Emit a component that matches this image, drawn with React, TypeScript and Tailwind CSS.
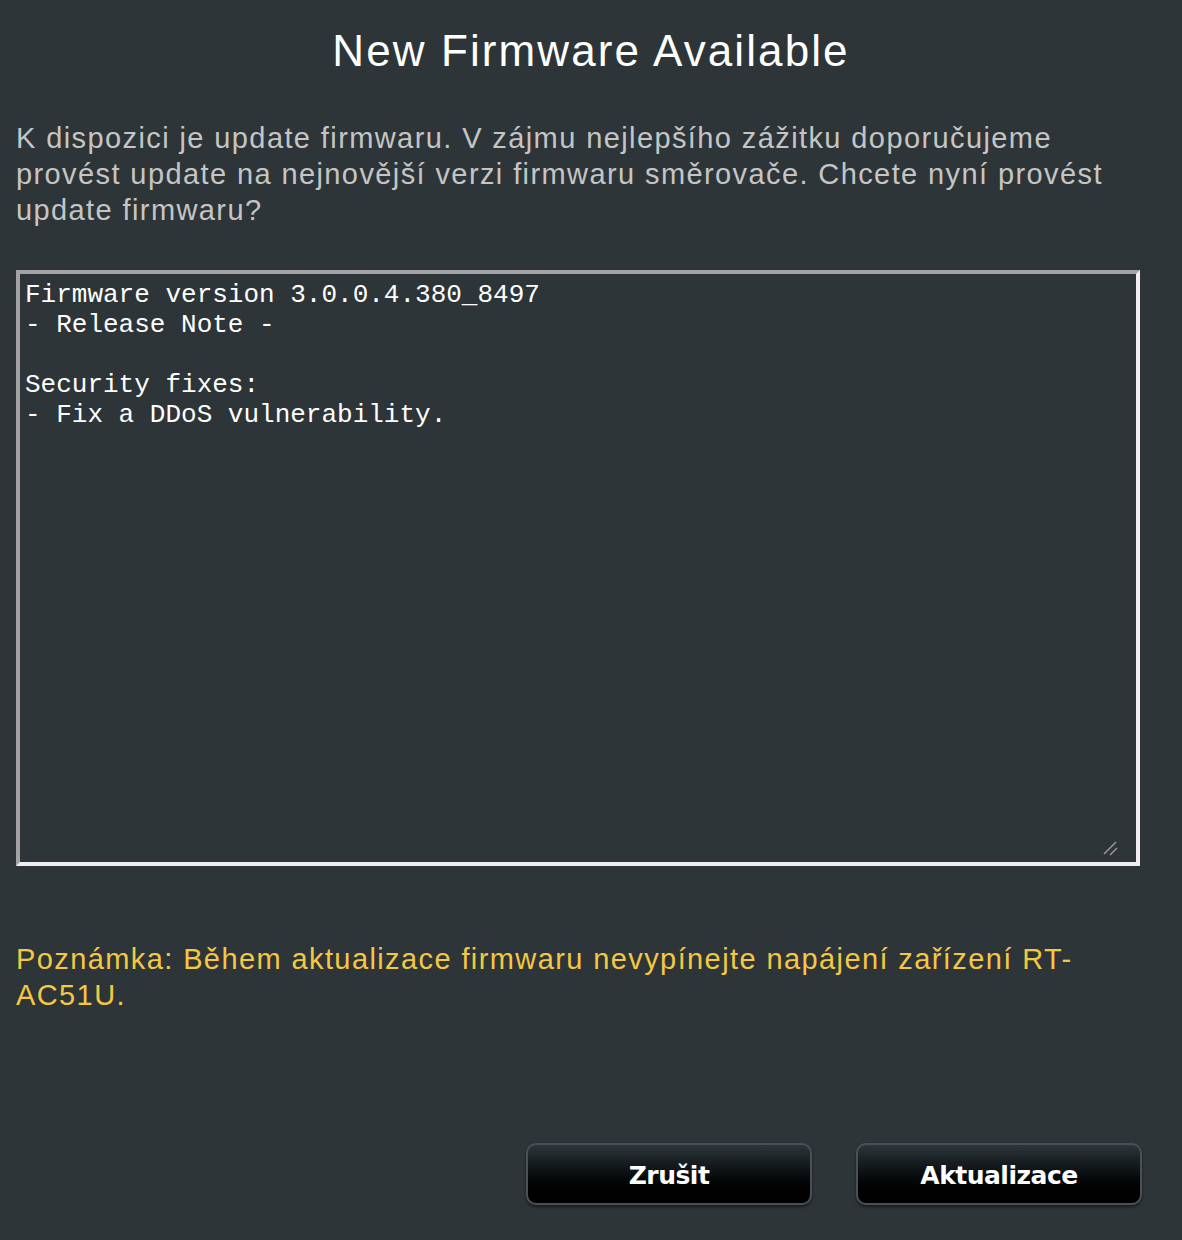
export default function App() {
  return (
    <div className="w-[1182px] h-[1240px] bg-[#2e3538] flex flex-col px-4 font-['Liberation_Sans',Arial,Helvetica,sans-serif]">
      <h1 className="text-white text-[44px] leading-[52px] text-center mt-[25px] font-normal tracking-[2.1px]">New Firmware Available</h1>
      <p className="text-[#c5c5c5] text-[29px] leading-[36px] mt-[43px] pr-[40px] tracking-[1.4px]">
        K dispozici je update firmwaru. V zájmu nejlepšího zážitku doporučujeme provést update na nejnovější verzi firmwaru směrovače. Chcete nyní provést update firmwaru?
      </p>
      <div className="relative mt-[42px] w-[1124px] h-[596px] border-4 border-t-[#a3a3a3] border-l-[#a3a3a3] border-b-[#efefef] border-r-[#efefef] bg-[#2e3538] px-[5px] pt-[6px]">
        <pre className="text-white text-[26px] leading-[30px] m-0 font-['Liberation_Mono','Courier_New',monospace]">
{`Firmware version 3.0.0.4.380_8497
- Release Note -

Security fixes:
- Fix a DDoS vulnerability.`}
        </pre>
        <svg className="absolute right-[18px] bottom-[6px]" width="16" height="16" viewBox="0 0 16 16">
          <line x1="2" y1="14" x2="14" y2="2" stroke="#9a9a9a" strokeWidth="1.5" />
          <line x1="8" y1="15" x2="15" y2="8" stroke="#9a9a9a" strokeWidth="1.5" />
        </svg>
      </div>
      <p className="text-[#f5c842] text-[29px] leading-[36px] mt-[75px] pr-[40px] tracking-[1.4px]">
        Poznámka: Během aktualizace firmwaru nevypínejte napájení zařízení RT-AC51U.
      </p>
      <div className="flex justify-end gap-[44px] mt-[130px] pr-[24px]">
        {["Zrušit", "Aktualizace"].map((t) => (
          <button
            key={t}
            className="w-[286px] h-[62px] rounded-[10px] border-2 border-[#4a5154] bg-gradient-to-b from-[#2c363b] to-[#000000] text-white text-[25px] font-bold tracking-[-0.5px] shadow-[0_2px_3px_rgba(0,0,0,0.5)] font-['DejaVu_Sans',Verdana,sans-serif] pt-[3px]"
          >
            {t}
          </button>
        ))}
      </div>
    </div>
  );
}
